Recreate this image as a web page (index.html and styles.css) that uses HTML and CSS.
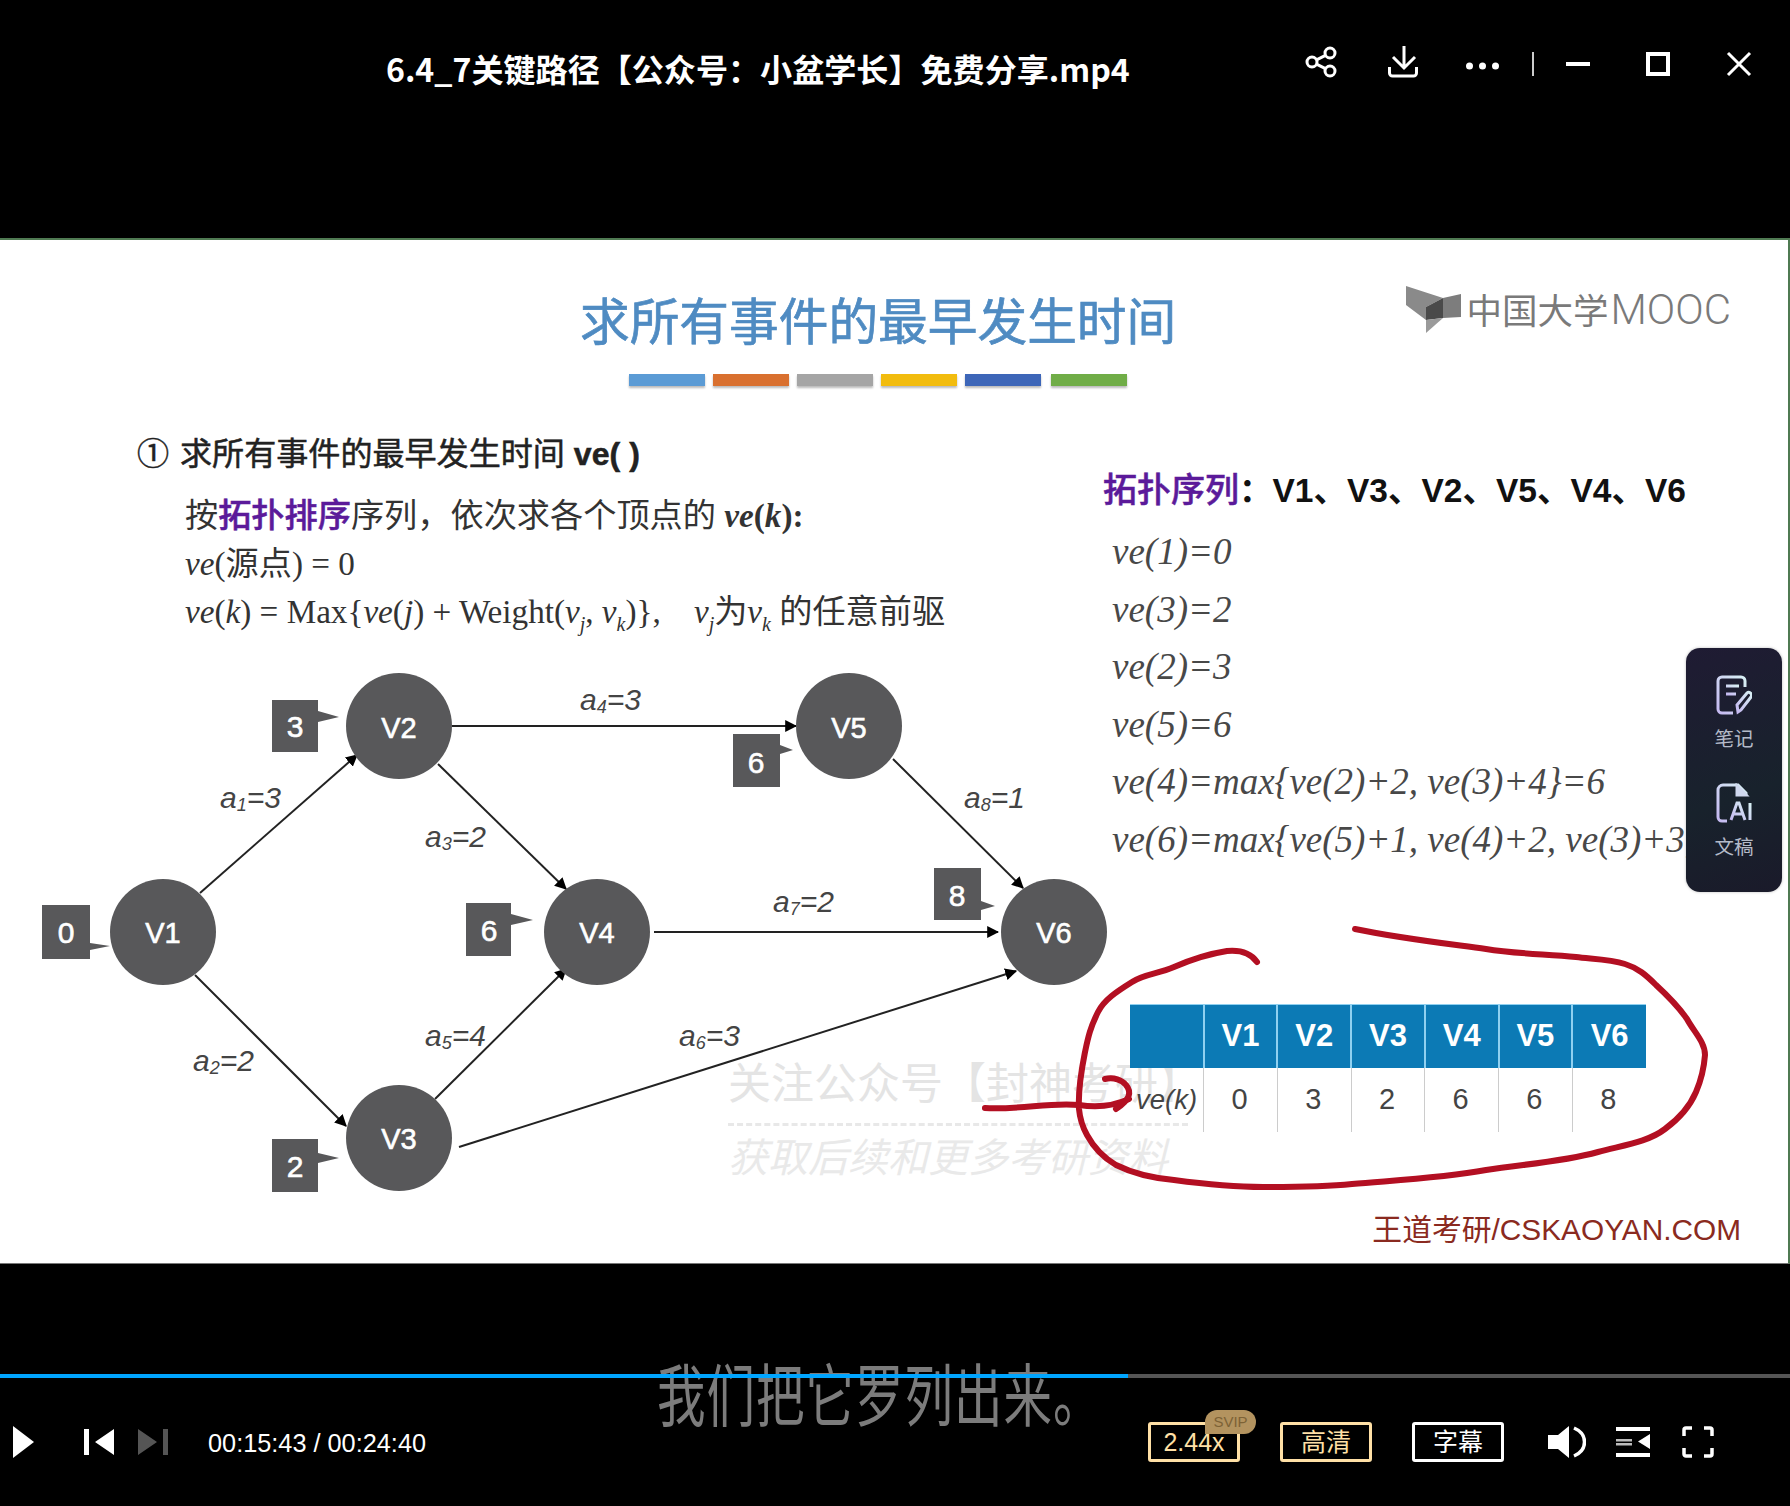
FILE: index.html
```html
<!DOCTYPE html>
<html>
<head>
    <meta charset="utf-8">
    <title>6.4_7关键路径</title>
    <link rel="stylesheet" href="styles.css">
</head>
<body>
    <header class="top-bar">
        <h1 class="video-title">6.4_7关键路径【公众号：小盆学长】免费分享.mp4</h1>
        <div class="win-icons">
            <svg class="ic-share" viewBox="0 0 34 32"><circle cx="8" cy="16" r="5"/><circle cx="26" cy="7" r="5"/><circle cx="26" cy="25" r="5"/><path d="M12.500 13.800l9-4.500M12.500 18.200l9 4.500"/></svg>
            <svg class="ic-download" viewBox="0 0 34 32"><path d="M18 0v22M7 11l11 11 11-11M3.500 21v6a3 3 0 0 0 3 3h21a3 3 0 0 0 3-3v-6"/></svg>
            <svg class="ic-dots" viewBox="0 0 34 32"><circle class="solid" cx="3.500" cy="20" r="3.500"/><circle class="solid" cx="16.500" cy="20" r="3.500"/><circle class="solid" cx="29.500" cy="20" r="3.500"/></svg>
            <div class="win-sep"></div>
            <svg class="ic-min" viewBox="0 0 24 24"><path d="M0 12h24"/></svg>
            <svg class="ic-max" viewBox="0 0 24 24"><rect x="2" y="2" width="20" height="20"/></svg>
            <svg class="ic-close" viewBox="0 0 24 24"><path d="M1 1l22 22M23 1L1 23"/></svg>
        </div>
    </header>

    <main class="slide">
        <div class="watermark">
            <div class="wm-top">关注公众号【封神考研】</div>
            <div class="wm-rule"></div>
            <div class="wm-bottom">获取后续和更多考研资料</div>
        </div>

        <div class="slide-head">
            <div>
                <h2 class="slide-title">求所有事件的最早发生时间</h2>
                <div class="rainbow">
                    <span class="c1"></span><span class="c2"></span><span class="c3"></span>
                    <span class="c4"></span><span class="c5"></span><span class="c6"></span>
                </div>
            </div>
            <div class="mooc-logo">
                <svg viewBox="0 0 56 48">
                    <polygon class="wing" points="0,1 37,13 20,22 20,35 0,20"/>
                    <polygon class="spine" points="20,22 37,13 37,33 20,35"/>
                    <polygon class="page" points="37,13 55,9 55,32 37,33"/>
                    <polygon class="tail" points="20,35 37,33 20,48"/>
                </svg>
                <span>中国大学<span class="mooc-word">MOOC</span></span>
            </div>
        </div>

        <div class="slide-body">
            <section class="left-col">
                <div class="lead"><span class="circled">①</span>求所有事件的最早发生时间 <b>ve( )</b></div>
                <div class="step">按<b class="purple">拓扑排序</b>序列，依次求各个顶点的 <b><i>ve</i>(<i>k</i>):</b></div>
                <div class="step"><i>ve</i>(源点) = 0</div>
                <div class="step"><i>ve</i>(<i>k</i>) = Max{<i>ve</i>(<i>j</i>) + Weight(<i>v<sub>j</sub></i>, <i>v<sub>k</sub></i>)}, &nbsp; &nbsp;<i>v<sub>j</sub></i>为<i>v<sub>k</sub></i> 的任意前驱</div>
            </section>

            <section class="right-col">
                <div class="topo"><b class="purple">拓扑序列</b>：V1、V3、V2、V5、V4、V6</div>
                <ul class="ve-list">
                    <li>ve(1)=0</li>
                    <li>ve(3)=2</li>
                    <li>ve(2)=3</li>
                    <li>ve(5)=6</li>
                    <li>ve(4)=max{ve(2)+2, ve(3)+4}=6</li>
                    <li>ve(6)=max{ve(5)+1, ve(4)+2, ve(3)+3,</li>
                </ul>
                <table class="ve-table">
                    <thead>
                        <tr><th></th><th>V1</th><th>V2</th><th>V3</th><th>V4</th><th>V5</th><th>V6</th></tr>
                    </thead>
                    <tbody>
                        <tr><td class="row-name">ve(k)</td><td>0</td><td>3</td><td>2</td><td>6</td><td>6</td><td>8</td></tr>
                    </tbody>
                </table>
            </section>
        </div>

        <div class="slide-foot">王道考研/CSKAOYAN.COM</div>

        <!-- graph, coordinates are page pixels -->
        <svg class="canvas graph" viewBox="0 240 1790 1026">
            <defs>
                <marker id="head" viewBox="0 0 10 10" refX="9" refY="5" markerWidth="6" markerHeight="6" orient="auto"><path d="M0 0L10 5L0 10z"/></marker>
            </defs>
            <line class="edge" x1="200" y1="893" x2="357" y2="755" marker-end="url(#head)"/>
            <line class="edge" x1="195" y1="975" x2="346" y2="1126" marker-end="url(#head)"/>
            <line class="edge" x1="438" y1="764" x2="566" y2="889" marker-end="url(#head)"/>
            <line class="edge" x1="435" y1="1099" x2="566" y2="969" marker-end="url(#head)"/>
            <line class="edge" x1="452" y1="726" x2="796" y2="726" marker-end="url(#head)"/>
            <line class="edge" x1="654" y1="932" x2="998" y2="932" marker-end="url(#head)"/>
            <line class="edge" x1="893" y1="759" x2="1023" y2="888" marker-end="url(#head)"/>
            <line class="edge" x1="459" y1="1147" x2="1016" y2="971" marker-end="url(#head)"/>

            <circle class="node" cx="163" cy="932" r="53"/><text class="node-label" x="163" y="943">V1</text>
            <circle class="node" cx="399" cy="726" r="53"/><text class="node-label" x="399" y="738">V2</text>
            <circle class="node" cx="399" cy="1138" r="53"/><text class="node-label" x="399" y="1149">V3</text>
            <circle class="node" cx="597" cy="932" r="53"/><text class="node-label" x="597" y="943">V4</text>
            <circle class="node" cx="849" cy="726" r="53"/><text class="node-label" x="849" y="738">V5</text>
            <circle class="node" cx="1054" cy="932" r="53"/><text class="node-label" x="1054" y="943">V6</text>

            <path class="tag" d="M42 905h48v38l20 3-20 4v9h-48z"/><text class="tag-label" x="66" y="943">0</text>
            <path class="tag" d="M272 700h46v11l21 6-21 5v30h-46z"/><text class="tag-label" x="295" y="737">3</text>
            <path class="tag" d="M466 903h45v11l22 6-22 5v31h-45z"/><text class="tag-label" x="489" y="941">6</text>
            <path class="tag" d="M272 1139h46v14l21 5-21 5v29h-46z"/><text class="tag-label" x="295" y="1177">2</text>
            <path class="tag" d="M733 734h47v11l13 5-13 4v33h-47z"/><text class="tag-label" x="756" y="773">6</text>
            <path class="tag" d="M934 868h47v33l14 5-14 4v10h-47z"/><text class="tag-label" x="957" y="906">8</text>

            <text class="weight" x="220" y="808">a<tspan class="idx" dy="3">1</tspan><tspan dy="-3">=3</tspan></text>
            <text class="weight" x="193" y="1071">a<tspan class="idx" dy="3">2</tspan><tspan dy="-3">=2</tspan></text>
            <text class="weight" x="425" y="847">a<tspan class="idx" dy="3">3</tspan><tspan dy="-3">=2</tspan></text>
            <text class="weight" x="580" y="710">a<tspan class="idx" dy="3">4</tspan><tspan dy="-3">=3</tspan></text>
            <text class="weight" x="425" y="1046">a<tspan class="idx" dy="3">5</tspan><tspan dy="-3">=4</tspan></text>
            <text class="weight" x="679" y="1046">a<tspan class="idx" dy="3">6</tspan><tspan dy="-3">=3</tspan></text>
            <text class="weight" x="773" y="912">a<tspan class="idx" dy="3">7</tspan><tspan dy="-3">=2</tspan></text>
            <text class="weight" x="964" y="808">a<tspan class="idx" dy="3">8</tspan><tspan dy="-3">=1</tspan></text>
        </svg>

        <!-- red pen marks drawn over the slide -->
        <svg class="canvas ink" viewBox="0 238 1790 1026">
            <path d="M1257 960C1250 950 1238 948 1227 949C1208 952 1190 958 1174 965C1158 972 1144 972 1132 980C1116 990 1104 998 1098 1010C1090 1026 1088 1036 1085 1050C1081 1070 1078 1090 1079 1107C1080 1118 1082 1124 1087 1133C1094 1146 1104 1156 1116 1163C1134 1172 1152 1176 1174 1178C1204 1182 1232 1185 1263 1185C1294 1185 1322 1185 1352 1182C1398 1178 1442 1176 1486 1168C1524 1162 1562 1160 1598 1150C1624 1143 1648 1140 1665 1127C1680 1116 1690 1104 1696 1090C1702 1076 1704 1066 1705 1053C1705 1040 1694 1030 1687 1017C1678 1004 1668 994 1656 983C1646 973 1638 966 1625 962C1610 957 1592 957 1576 955C1546 952 1516 952 1486 947C1442 941 1398 936 1355 927"/>
            <path d="M985 1106C1020 1108 1050 1100 1079 1103C1098 1106 1114 1104 1129 1097"/>
            <path d="M1105 1077C1114 1075 1122 1078 1126 1083C1132 1090 1130 1098 1116 1107"/>
        </svg>

        <aside class="side-panel">
            <div class="side-item">
                <svg viewBox="0 0 36 40">
                    <defs><linearGradient id="lilac" x1="0" y1="1" x2="1" y2="0"><stop offset="0" stop-color="#c4b8f0"/><stop offset="1" stop-color="#d8f0f4"/></linearGradient></defs>
                    <path class="side-ic" d="M29 12V6a4 4 0 0 0-4-4H6a4 4 0 0 0-4 4v28a4 4 0 0 0 4 4h11"/>
                    <path class="side-ic" d="M10 11h13M10 19h10"/>
                    <path class="side-ic" d="M22 37l-1-7 10-12c2-2 6 1 4 4L25 35z"/>
                </svg>
                <span>笔记</span>
            </div>
            <div class="side-item">
                <svg viewBox="0 0 36 40">
                    <path class="side-ic" d="M30 12V10L22 2H7a5 5 0 0 0-5 5v27a4 4 0 0 0 4 4h5"/>
                    <path class="side-ic fold" d="M21 3v9h9z"/>
                    <path class="side-ic" d="M15 37l6-17h2l6 17M17 31h10M34 20v17"/>
                </svg>
                <span>文稿</span>
            </div>
        </aside>
    </main>

    <footer class="player">
        <div class="progress"><div class="progress-done"></div></div>
        <div class="subtitle">我们把它罗列出来。</div>
        <div class="controls">
            <div class="ctl-left">
                <svg class="ic-play" viewBox="0 0 21 32"><path class="fill" d="M0 0L21 16L0 32z"/></svg>
                <svg class="ic-prev" viewBox="0 0 30 28"><path class="fill" d="M0 1h5v26H0zM30 1v26L11 14z"/></svg>
                <svg class="ic-next" viewBox="0 0 30 28"><path class="fill dim" d="M25 1h5v26h-5zM0 1v26l19-13z"/></svg>
                <span class="time">00:15:43 / 00:24:40</span>
            </div>
            <div class="ctl-right">
                <div class="btn gold speed">2.44x<span class="svip">SVIP</span></div>
                <div class="btn gold">高清</div>
                <div class="btn">字幕</div>
                <svg class="ic-vol" viewBox="0 0 38 32"><path class="fill" d="M0 9h10L21 0v32L10 23H0z"/><path class="line" d="M26 2c14 6 14 22 0 28"/></svg>
                <svg class="ic-list" viewBox="0 0 34 30"><path class="fill" d="M0 0h34v4H0zM0 26h34v4H0zM34 7v15l-12-7.500z"/><path class="fill soft" d="M0 12h16v2.500H0zM0 16h16v2.500H0z"/></svg>
                <svg class="ic-full" viewBox="0 0 32 32"><path class="line" d="M2 10V4a2 2 0 0 1 2-2h6M22 2h6a2 2 0 0 1 2 2v6M30 22v6a2 2 0 0 1-2 2h-6M10 30H4a2 2 0 0 1-2-2v-6"/></svg>
            </div>
        </div>
    </footer>
</body>
</html>
```

FILE: styles.css
```css
* {
    box-sizing: border-box;
}

html, body {
    margin: 0;
    padding: 0;
}

body {
    width: 1790px;
    height: 1506px;
    overflow: hidden;
    background: #000;
    font-family: "Liberation Sans", "Noto Sans CJK SC", sans-serif;
}

/* title bar */
.top-bar {
    height: 238px;
    display: flex;
    justify-content: space-between;
    align-items: flex-start;
    padding: 46px 39px 0 386px;
    color: #fff;
}

.video-title {
    margin: -2px 0 0;
    font-size: 32.100px;
    line-height: 48px;
    font-weight: 700;
    font-family: "Noto Sans CJK SC", sans-serif;
}

.win-icons {
    display: flex;
    align-items: flex-start;
}

.win-icons svg {
    fill: none;
    stroke: #fff;
    stroke-width: 3;
    overflow: visible;
}

.win-icons .solid {
    fill: #fff;
    stroke: none;
}

.ic-share, .ic-download, .ic-dots {
    width: 34px;
    height: 32px;
}

.ic-download { margin-left: 48px; }
.ic-dots { margin-left: 46px; }

.win-sep {
    width: 2px;
    height: 24px;
    margin: 6px 0 0 32px;
    background: #ccc;
}

.ic-min, .ic-max, .ic-close {
    width: 24px;
    height: 24px;
    margin-top: 6px;
}

.ic-min { margin-left: 32px; }
.ic-max { margin-left: 56px; }
.ic-close { margin-left: 57px; }

.win-icons .ic-max, .win-icons .ic-min { stroke-width: 4; }

/* slide */
.slide {
    position: relative;
    height: 1026px;
    display: flex;
    flex-direction: column;
    background: #fff;
    border-top: 2px solid #4f7a52;
    border-right: 2px solid #4f7a52;
    border-bottom: 1px solid #777;
}

.slide-head {
    height: 160px;
    display: flex;
    justify-content: space-between;
    align-items: flex-start;
    padding: 48px 57px 0 580px;
}

.slide-title {
    margin: 0;
    font-size: 49.700px;
    line-height: 60px;
    font-weight: 400;
    color: #4f8bc2;
    font-family: "Noto Sans CJK SC", sans-serif;
    -webkit-text-stroke: 0.7px #4f8bc2;
}

.rainbow {
    display: flex;
    gap: 8px;
    margin: 26px 0 0 49px;
}

.rainbow span {
    width: 76px;
    height: 12px;
    box-shadow: 0 2px 2px #bbb;
}

.rainbow .c1 { background: #5b9bd5; }
.rainbow .c2 { background: #d9702f; }
.rainbow .c3 { background: #a5a5a5; }
.rainbow .c4 { background: #f2bc0e; }
.rainbow .c5 { background: #3d66b8; }
.rainbow .c6 { background: #70ad47; margin-left: 2px; }

.mooc-logo {
    display: flex;
    align-items: flex-start;
    margin-top: -3px;
    color: #7a7a7a;
    font-size: 35.500px;
    line-height: 50px;
    white-space: nowrap;
}

.mooc-logo svg {
    width: 56px;
    height: 48px;
    margin-right: 4px;
}

.mooc-word {
    margin-left: 2px;
    font-family: Roboto, sans-serif;
    font-size: 42px;
    font-weight: 300;
}

.mooc-logo .wing { fill: #8a8a8a; }
.mooc-logo .spine { fill: #4a4a4a; }
.mooc-logo .page { fill: #7d7d7d; }
.mooc-logo .tail { fill: #9a9a9a; }

.slide-body {
    position: relative;
    display: flex;
    align-items: flex-start;
}

.left-col {
    width: 1103px;
    padding: 30px 0 0 137px;
    color: #333;
    font-family: "Liberation Serif", "Noto Sans CJK SC", serif;
    font-size: 33.200px;
}

.lead {
    height: 48px;
    line-height: 48px;
    margin-bottom: 14px;
    color: #222;
    font-family: "Liberation Sans", "Noto Sans CJK SC", sans-serif;
    font-size: 32.100px;
    font-weight: 400;
    -webkit-text-stroke: 0.5px #222;
    white-space: nowrap;
}

.circled {
    display: inline-block;
    width: 43px;
}

.step {
    height: 48px;
    line-height: 48px;
    margin-left: 48px;
    white-space: nowrap;
}

.purple {
    color: #5b1a9a;
    font-weight: 500;
    -webkit-text-stroke: 0.5px #5b1a9a;
}

.step sub {
    font-size: 0.6em;
    line-height: 0;
}

.right-col {
    padding-top: 66px;
}

.topo {
    height: 48px;
    line-height: 48px;
    font-size: 33.500px;
    font-weight: 700;
    color: #111;
    white-space: nowrap;
}

.topo .purple {
    font-size: 34px;
}

.ve-list {
    list-style: none;
    margin: 9px 0 0 9px;
    padding: 0;
    height: 345px;
    color: #484848;
    font-family: "Liberation Serif", serif;
    font-style: italic;
    font-size: 37px;
    line-height: 57.500px;
    white-space: nowrap;
}

.ve-table {
    width: 516px;
    margin: 136px 0 0 27px;
    border-collapse: collapse;
    table-layout: fixed;
}

.ve-table th {
    height: 63px;
    padding: 0;
    background: #0c7ab5;
    border-left: 2px solid #8fd0f0;
    border-top: 1px solid #8fd0f0;
    color: #fff;
    font-size: 31px;
    font-weight: 700;
}

.ve-table th:first-child {
    border-left: none;
}

.ve-table td {
    height: 64px;
    padding: 0 2px 0 0;
    border-left: 1px solid #ccc;
    text-align: center;
    color: #444;
    font-size: 29px;
}

.ve-table td.row-name {
    border-left: none;
    text-align: right;
    padding-right: 6px;
    font-size: 27.500px;
    font-style: italic;
}

.slide-foot {
    margin-top: auto;
    padding: 0 47px 13px 0;
    text-align: right;
    color: #8a2a20;
    font-size: 29.800px;
    line-height: 40px;
}

/* overlays on the slide */
.canvas {
    position: absolute;
    left: 0;
    top: 0;
    width: 1790px;
    height: 1026px;
    pointer-events: none;
}

.edge {
    stroke: #222;
    stroke-width: 2;
}

.node { fill: #58585a; }
.tag { fill: #58585a; }

.node-label, .tag-label {
    fill: #fff;
    stroke: #fff;
    stroke-width: 0.6;
    text-anchor: middle;
    font-size: 29px;
}

.tag-label { font-size: 30px; }

.weight {
    fill: #444;
    font-size: 30px;
    font-style: italic;
}

.weight .idx { font-size: 18px; }

.ink path {
    fill: none;
    stroke: #b30f22;
    stroke-width: 6;
    stroke-linecap: round;
}

.watermark {
    position: absolute;
    left: 728px;
    top: 815px;
    width: 460px;
    color: #e4e4e4;
    font-size: 43px;
    font-family: "Noto Sans CJK SC", sans-serif;
    white-space: nowrap;
}

.wm-top {
    line-height: 50px;
}

.wm-rule {
    margin-top: 18px;
    border-top: 3px dashed #e8e8e8;
}

.wm-bottom {
    margin-top: 2px;
    line-height: 54px;
    font-size: 40px;
    font-style: italic;
    color: #e9e9e9;
}

.side-panel {
    position: absolute;
    left: 1686px;
    top: 408px;
    width: 96px;
    height: 244px;
    padding-top: 27px;
    border-radius: 14px;
    background: linear-gradient(160deg, #1f1b33, #18222c 60%, #1a1a2a);
    box-shadow: 0 0 3px #bbb;
    text-align: center;
}

.side-item {
    height: 108px;
    color: #b4bac8;
    font-size: 19.500px;
    line-height: 22px;
}

.side-item svg {
    display: block;
    width: 36px;
    height: 40px;
    margin: 0 auto 13px;
}

.side-ic {
    fill: none;
    stroke: url(#lilac);
    stroke-width: 3;
}

.side-ic.fold {
    fill: #cfd8ee;
    stroke: #cfd8ee;
}

/* bottom bar */
.player {
    position: relative;
    height: 242px;
    padding-top: 110px;
}

.progress {
    position: relative;
    z-index: 2;
    height: 4px;
    background: #555;
}

.progress-done {
    width: 1128px;
    height: 4px;
    background: #00a5ff;
}

.subtitle {
    position: absolute;
    left: 657px;
    top: 94px;
    color: #7c7c7c;
    font-size: 48.500px;
    letter-spacing: 1px;
    line-height: 68px;
    white-space: nowrap;
    transform: scaleY(1.4);
    font-family: "Noto Sans CJK SC", sans-serif;
}

.controls {
    display: flex;
    justify-content: space-between;
    align-items: center;
    height: 40px;
    margin-top: 44px;
    padding: 0 76px 0 13px;
}

.ctl-left, .ctl-right {
    display: flex;
    align-items: center;
}

.fill { fill: #fff; }
.fill.dim { fill: #555; }
.fill.soft { fill: #bbb; }

.line {
    fill: none;
    stroke: #fff;
    stroke-width: 3.500;
}

.ic-play { width: 21px; height: 32px; }
.ic-prev { width: 30px; height: 28px; margin-left: 50px; }
.ic-next { width: 30px; height: 28px; margin-left: 24px; }

.time {
    margin: 2px 0 0 40px;
    color: #fff;
    font-size: 25.300px;
}

.btn {
    position: relative;
    width: 92px;
    height: 40px;
    margin-right: 40px;
    border: 3px solid #fff;
    border-radius: 3px;
    color: #fff;
    font-size: 25px;
    line-height: 34px;
    text-align: center;
}

.btn.gold {
    border-color: #ffe0a6;
    color: #ffe0a6;
}

.svip {
    position: absolute;
    right: -19px;
    top: -15px;
    width: 51px;
    height: 24px;
    border-radius: 12px 12px 12px 0;
    background: #b3935f;
    color: #7d6236;
    font-size: 15px;
    line-height: 24px;
}

.ic-vol { width: 38px; height: 32px; margin-left: 4px; }
.ic-list { width: 34px; height: 30px; margin-left: 30px; }
.ic-full { width: 32px; height: 32px; margin-left: 32px; }
```
